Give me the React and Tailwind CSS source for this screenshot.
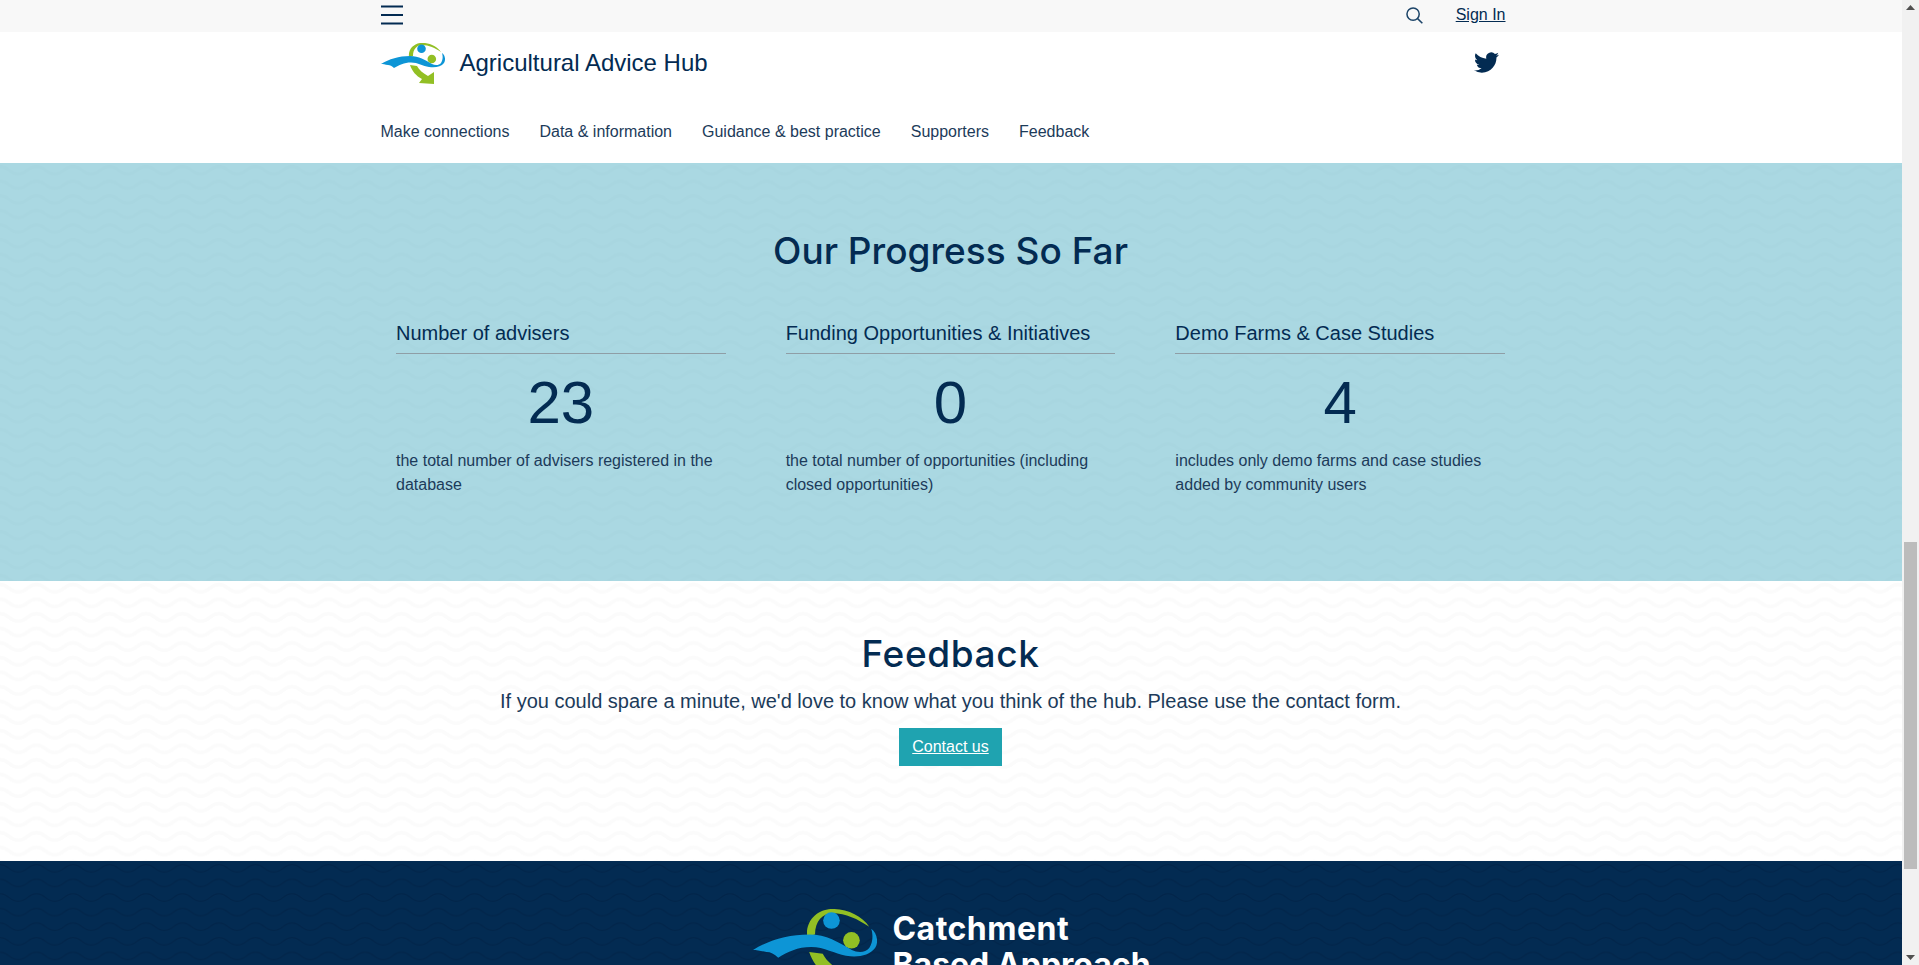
const navy = '#032b52';

function Waves({ id, color, opacity = 1, width = 2 }) {
  return (
    <svg className="absolute inset-0 w-full h-full pointer-events-none" aria-hidden="true">
      <defs>
        <pattern id={id} width="36.500" height="14.600" patternUnits="userSpaceOnUse">
          <path
            d="M0 3.500C9 3.500 9 11 18.250 11S27.500 3.500 36.500 3.500"
            fill="none"
            stroke={color}
            strokeOpacity={opacity}
            strokeWidth={width}
          />
        </pattern>
      </defs>
      <rect width="100%" height="100%" fill={`url(#${id})`} />
    </svg>
  );
}

function HubLogo({ className }) {
  return (
    <svg viewBox="0 0 64 41" className={className} aria-hidden="true">
      <path d="M28 14C27 7 32 1 39 0c8-1 17 3 21 9-6-4-12-7-19-7-5 0-9 4-9 11z" fill="#92bf24" />
      <path d="M29 22c2 6 6 11 12 14l-3 4 15 1V29l-6 4c-5-3-9-6-11-10z" fill="#92bf24" />
      <circle cx="40.500" cy="5.800" r="4.300" fill="#0d95d6" />
      <circle cx="50.800" cy="16" r="4.300" fill="#92bf24" />
      <path
        d="M0 21C8 16 18 13 29 13C38 13 44 17 51 21C54 22.500 58 22.500 60 20C62 17 62 13 61 10C64 12 65 17 63 20C60 24 54 25 48 24C42 23 37 19.500 30 19.500C23 19.500 18 22 13 25C11 23 9 22 7 22C4 21.500 2 21 0 21Z"
        fill="#0d95d6"
      />
    </svg>
  );
}

function Stat({ title, value, text }) {
  return (
    <div>
      <h3 className="text-[20px] leading-[24px] pb-[8px] border-b border-[#8f9ea6]">{title}</h3>
      <div className="text-[60px] leading-[72px] text-center mt-[13px]">{value}</div>
      <p className="text-[16px] leading-[24px] mt-[10px] text-[#1c3b5a]">{text}</p>
    </div>
  );
}

export default function App() {
  return (
    <div className="h-screen overflow-hidden flex bg-white" style={{ fontFamily: '"Liberation Sans", Arial, sans-serif', color: navy }}>
      <div className="flex-1 min-w-0 flex flex-col overflow-hidden">
        <div className="h-[32px] shrink-0 bg-[#f8f8f8] pr-[1px]">
          <div className="w-[1140px] mx-auto h-full flex items-center">
            <svg width="22" height="20" viewBox="0 0 22 20" className="mt-[-2px]" aria-hidden="true">
              <path d="M0 1.500h22M0 10h22M0 18.500h22" stroke={navy} strokeWidth="2" />
            </svg>
            <div className="ml-auto mr-[15px] flex items-center mt-[-2px]">
              <svg width="17" height="17" viewBox="0 0 18 18" fill="none" stroke="#1c4468" strokeWidth="1.600" aria-hidden="true">
                <circle cx="7.500" cy="7.500" r="6.500" />
                <path d="M12.300 12.300L17.300 17.300" />
              </svg>
              <a href="#" className="ml-[33px] text-[16px] underline">Sign In</a>
            </div>
          </div>
        </div>

        <header className="h-[131px] shrink-0 bg-white pr-[1px]">
          <div className="w-[1140px] mx-auto">
            <div className="h-[62px] flex items-center">
              <HubLogo className="w-[64px] h-[41px]" />
              <span className="ml-[15px] text-[24px] leading-[30px] mt-[-1px]">Agricultural Advice Hub</span>
              <svg viewBox="0 0 24 24" className="w-[25px] h-[25px] ml-auto mr-[22px] mt-[-2px]" fill={navy} aria-hidden="true">
                <path d="M23.953 4.570a10 10 0 01-2.825.775 4.958 4.958 0 002.163-2.723c-.951.555-2.005.959-3.127 1.184a4.920 4.920 0 00-8.384 4.482C7.690 8.095 4.067 6.130 1.640 3.162a4.822 4.822 0 00-.666 2.475c0 1.710.870 3.213 2.188 4.096a4.904 4.904 0 01-2.228-.616v.060a4.923 4.923 0 003.946 4.827 4.996 4.996 0 01-2.212.085 4.936 4.936 0 004.604 3.417 9.867 9.867 0 01-6.102 2.105c-.390 0-.779-.023-1.170-.067a13.995 13.995 0 007.557 2.209c9.053 0 13.998-7.496 13.998-13.985 0-.210 0-.420-.015-.630A9.935 9.935 0 0024 4.590z" />
              </svg>
            </div>
            <nav className="flex gap-[30px] text-[16px] leading-[24px] mt-[26px] text-[#1c3b5a]">
              <a href="#">Make connections</a>
              <a href="#">Data &amp; information</a>
              <a href="#">Guidance &amp; best practice</a>
              <a href="#">Supporters</a>
              <a href="#">Feedback</a>
            </nav>
          </div>
        </header>

        <section className="relative h-[418px] shrink-0 bg-[#aad8e2] pr-[1px]">
          <Waves id="wave-blue" color="#a4d3dd" opacity={0.4} width={3} />
          <div className="relative w-[1109px] mx-auto">
            <h2 className="pt-[64px] text-center text-[37px] leading-[48px] font-medium" style={{ fontFamily: 'Inter, sans-serif' }}>Our Progress So Far</h2>
            <div className="grid grid-cols-3 gap-[60px] mt-[46px]">
              <Stat title="Number of advisers" value="23" text="the total number of advisers registered in the database" />
              <Stat title="Funding Opportunities & Initiatives" value="0" text="the total number of opportunities (including closed opportunities)" />
              <Stat title="Demo Farms & Case Studies" value="4" text="includes only demo farms and case studies added by community users" />
            </div>
          </div>
        </section>

        <section className="relative h-[280px] shrink-0 bg-white pr-[1px]">
          <Waves id="wave-white" color="#fbfbfb" width={3.500} />
          <div className="relative flex flex-col items-center">
            <h2 className="pt-[49px] text-[37px] leading-[48px] font-medium tracking-[0.6px]" style={{ fontFamily: 'Inter, sans-serif' }}>Feedback</h2>
            <p className="mt-[9px] text-[20px] leading-[28px] text-[#1c3b5a]">
              If you could spare a minute, we'd love to know what you think of the hub. Please use the contact form.
            </p>
            <a href="#" className="mt-[13px] h-[38px] px-[13.500px] flex items-center bg-[#1fa3b0] text-white text-[16px] underline">Contact us</a>
          </div>
        </section>

        <footer className="relative flex-1 bg-[#032b52] pr-[1px]">
          <Waves id="wave-navy" color="#02254a" width={1.200} />
          <div className="relative flex justify-center pt-[48px] pl-[3px]">
            <HubLogo className="w-[124px] h-[80px] shrink-0" />
            <div className="ml-[15px] mt-[2px] text-white text-[32px] leading-[36px] font-bold" style={{ fontFamily: 'Inter, sans-serif' }}>
              <div className="tracking-[0.5px]">Catchment</div>
              <div>Based Approach</div>
            </div>
          </div>
        </footer>
      </div>

      <aside className="w-[17px] shrink-0 bg-[#f1f1f1] flex flex-col items-center">
        <svg className="mt-[5px]" width="9" height="5" viewBox="0 0 9 5" aria-hidden="true">
          <path d="M0 5h9L4.500 0z" fill="#505050" />
        </svg>
        <div className="mt-[532px] w-[13px] h-[327px] bg-[#bcbcbc]"></div>
        <svg className="mt-auto mb-[5px]" width="9" height="5" viewBox="0 0 9 5" aria-hidden="true">
          <path d="M0 0h9L4.500 5z" fill="#505050" />
        </svg>
      </aside>
    </div>
  );
}
